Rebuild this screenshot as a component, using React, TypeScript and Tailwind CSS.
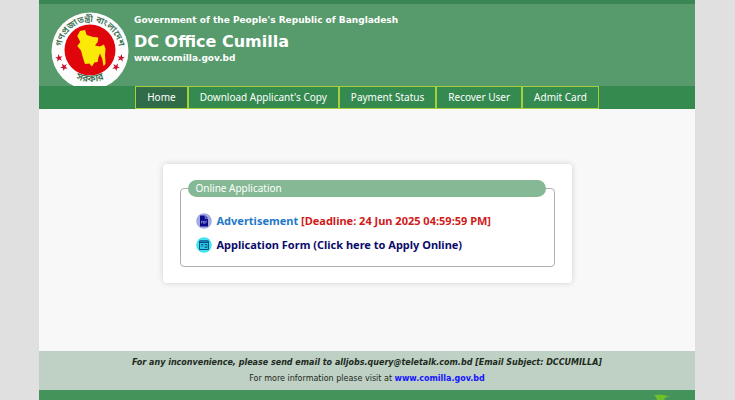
import React from "react";

const NAV_ITEMS: string[] = [
  "Home",
  "Download Applicant's Copy",
  "Payment Status",
  "Recover User",
  "Admit Card",
];

function Star({ x, y, turn }: { x: number; y: number; turn: number }) {
  return (
    <path
      transform={`translate(${x} ${y}) rotate(${turn})`}
      d="M0 -4 L1 -1.2 L3.8 -1.2 L1.5 .5 L2.4 3.3 L0 1.6 L-2.4 3.3 L-1.5 .5 L-3.8 -1.2 L-1 -1.2 Z"
      fill="#c8102e"
    />
  );
}

function Emblem() {
  return (
    <svg viewBox="0 0 78 74" className="h-[74px] w-[78px] shrink-0" role="img" aria-label="Government seal of Bangladesh">
      <defs>
        <path id="arc-top" d="M11 46 A28.9 28.9 0 1 1 67 46" />
        <path id="arc-bottom" d="M17 62 A34.5 34.5 0 0 0 61 62" />
      </defs>
      <circle cx="39" cy="39" r="38.5" fill="#fdfdfd" />
      <circle cx="39" cy="38" r="25.500" fill="#e0040b" />
      <path
        d="M29 19 L34 18 L35.700 23 L42.300 25 L47.300 25.500 L46.700 30 L44 33.500 L49 34.500 L53 32.500 L54.500 37 L54 43 L54.500 52 L52.500 54 L51.300 47 L49 41.500 L47.300 46 L46.700 50 L43.300 50.500 L41 54.500 L38.300 51.500 L34 52 L31.700 45 L30 38.500 L26.300 34 L29.300 30 L26.300 24 Z"
        fill="#fbea08"
      />
      <text fontSize="9" fill="#3f7253" textAnchor="middle" className="font-['Noto_Sans_Bengali','Noto_Sans',sans-serif] font-semibold">
        <textPath href="#arc-top" startOffset="50%">গণপ্রজাতন্ত্রী বাংলাদেশ</textPath>
      </text>
      <text fontSize="10" fill="#3f7253" textAnchor="middle" className="font-['Noto_Sans_Bengali','Noto_Sans',sans-serif] font-semibold">
        <textPath href="#arc-bottom" startOffset="50%">সরকার</textPath>
      </text>
      <Star x={8} y={46} turn={-10} />
      <Star x={13} y={55} turn={-30} />
      <Star x={70} y={46} turn={10} />
      <Star x={65} y={55} turn={30} />
    </svg>
  );
}

function PdfIcon() {
  return (
    <svg viewBox="0 0 16 16" className="size-4 shrink-0" aria-hidden="true">
      <circle cx="8" cy="8" r="7.8" fill="#a3abe0" />
      <path d="M4 2.500 H9.200 L12 5.300 V13.500 H4 Z" fill="#0a0a8c" />
      <path d="M9.200 2.500 V5.300 H12" fill="none" stroke="#a9b4ec" strokeWidth=".8" />
      <path d="M5.500 10.500 V8 H6.300 V9.300 H5.500 M7.500 8 V10.500 H8.400 V8 Z M9.700 10.500 V8 H10.900 M9.700 9.200 H10.700" fill="none" stroke="#9fa8e6" strokeWidth=".6" />
    </svg>
  );
}

function FormIcon() {
  return (
    <svg viewBox="0 0 16 16" className="size-4 shrink-0" aria-hidden="true">
      <circle cx="8" cy="8" r="7.8" fill="#3fe4ee" />
      <path d="M3.500 4 H12.500 V12.500 H3.500 Z M3.500 5.500 H12.500 M5 3 V4.500 M7 3 V4.500 M9 3 V4.500 M11 3 V4.500" fill="#2cc8e0" stroke="#0b4f8a" strokeWidth="1" />
      <path d="M5 7.500 H7.200 M5 9 H7.200 M8.300 7.500 H11 V10.500 H9 V9" fill="none" stroke="#0b4f8a" strokeWidth=".8" />
    </svg>
  );
}

export default function App() {
  return (
    <div className="flex h-screen flex-col overflow-hidden bg-[#e0e0e0] pr-10 pl-[39px] font-['Noto_Sans',sans-serif] text-[10px] leading-4">
      <header className="border-t-4 border-[#3b8754] bg-[#579b6c]">
        <div className="flex h-[82px] items-end gap-[5px] pl-3">
          <Emblem />
          <div className="flex h-full flex-col pt-2 font-['DejaVu_Sans',sans-serif] text-[9px] font-bold text-white">
            <p>Government of the People's Republic of Bangladesh</p>
            <h1 className="mt-1 text-[16px] leading-5">DC Office Cumilla</h1>
            <p className="leading-3">www.comilla.gov.bd</p>
          </div>
        </div>
        <nav className="flex justify-center bg-[#348a4f]">
          {NAV_ITEMS.map((item, i) => (
            <a
              key={item}
              href="#"
              className={`border border-[#a5cf3d] px-[11px] py-[2px] leading-[17px] text-white ${i === 0 ? "bg-[#306c48]" : ""}`}
            >
              {item}
            </a>
          ))}
        </nav>
      </header>

      <main className="flex flex-col items-center bg-[#f8f8f8] px-4 pt-[55px] pb-[68px]">
        <section className="w-full max-w-[409px] rounded bg-white px-[17px] py-4 shadow-[0_0_6px_rgba(0,0,0,0.16)]">
          <fieldset className="rounded border border-[#b0b0b0] px-[7px] pb-[13px]">
            <legend className="w-full max-w-[358px] rounded-full bg-[#85b995] px-2 leading-[17px] text-white">Online Application</legend>
            <ul className="mt-4 flex flex-col gap-2 pl-2 text-[11px] font-bold">
              <li className="flex items-center gap-[5px]">
                <PdfIcon />
                <a href="#" className="text-[#1f78c8]">
                  Advertisement <span className="text-[#cf1a1a]">[Deadline: 24 Jun 2025 04:59:59 PM]</span>
                </a>
              </li>
              <li className="flex items-center gap-[5px]">
                <FormIcon />
                <a href="#" className="text-[#0b0b6b]">Application Form (Click here to Apply Online)</a>
              </li>
            </ul>
          </fieldset>
        </section>
      </main>

      <footer className="flex flex-1 flex-col">
        <div className="bg-[#bfd0c4] pt-1 pb-[3px] text-center font-['DejaVu_Sans',sans-serif] text-[8px] text-[#1c2a20]">
          <p className="font-bold italic">For any inconvenience, please send email to alljobs.query@teletalk.com.bd [Email Subject: DCCUMILLA]</p>
          <p>
            For more information please visit at <a href="#" className="font-bold text-[#1414ff]">www.comilla.gov.bd</a>
          </p>
        </div>
        <div className="flex flex-1 justify-end bg-[#43935a] pt-1 pr-6">
          <svg viewBox="0 0 18 6" className="h-[6px] w-[18px]" aria-hidden="true">
            <path d="M1 1 C6 .5 12 .5 17 2.500 C14 2.500 12 3 11 6 H4 C4 4 2.500 3 1 1 Z" fill="#6cc02c" />
          </svg>
        </div>
      </footer>
    </div>
  );
}
